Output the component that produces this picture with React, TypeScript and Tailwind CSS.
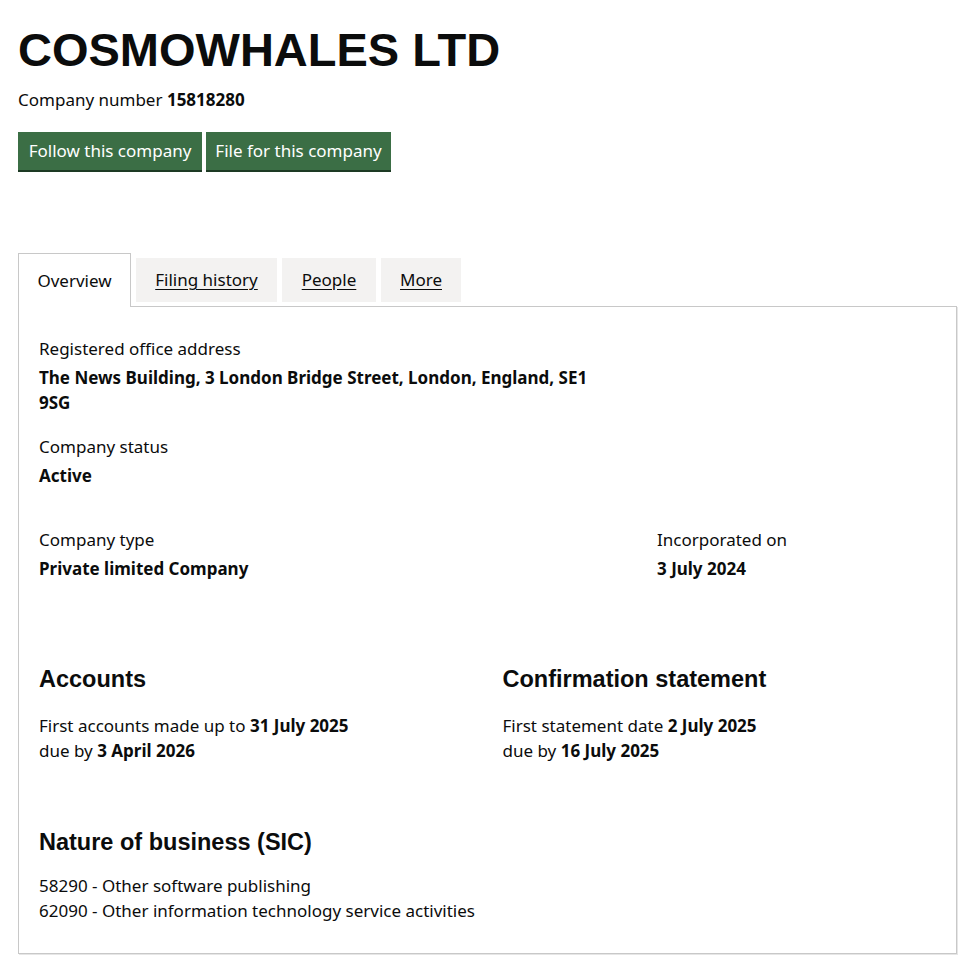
import React from 'react';

const tabs = [
    { label: 'Filing history', width: 'w-[141px]' },
    { label: 'People', width: 'w-[94px]' },
    { label: 'More', width: 'w-[80px]' },
];

function Field({ label, children, className = '' }: { label: string; children: React.ReactNode; className?: string }) {
    return (
        <div className={className}>
            <p className="leading-[25px]">{label}</p>
            <p className="mt-[4px] font-bold leading-[25px]">{children}</p>
        </div>
    );
}

export default function App() {
    return (
        <div className="min-h-screen bg-white px-[18px] text-[17px] text-[#0b0c0c] [font-family:'Noto_Sans',sans-serif]">
            {/* Header */}
            <h1 className="pt-[26px] text-[47px] font-bold leading-[47px] [font-family:'Liberation_Sans',Arial,sans-serif]">
                COSMOWHALES LTD
            </h1>
            <p className="mt-[14px] leading-[25px]">
                Company number <strong className="font-bold">15818280</strong>
            </p>

            <div className="mt-[20px] flex gap-[4px]">
                <button className="flex h-[38px] w-[184px] items-center justify-center bg-[#3b6e45] text-white shadow-[0_2px_0_#1d3a24]">
                    Follow this company
                </button>
                <button className="flex h-[38px] w-[185px] items-center justify-center bg-[#3b6e45] text-white shadow-[0_2px_0_#1d3a24]">
                    File for this company
                </button>
            </div>

            {/* Tabs */}
            <div className="mt-[83px] flex items-start">
                <div className="relative z-10 -mb-[1px] flex h-[54px] w-[113px] items-center justify-center border border-b-0 border-[#c8c8c8] bg-white">
                    Overview
                </div>
                {tabs.map((tab) => (
                    <a
                        key={tab.label}
                        href="#"
                        className={`ml-[5px] mt-[5px] flex h-[44px] ${tab.width} items-center justify-center bg-[#f3f2f1] underline underline-offset-[3px]`}
                    >
                        {tab.label}
                    </a>
                ))}
            </div>

            {/* Panel */}
            <div className="border border-[#c8c8c8] px-[20px] pb-[30px] pt-[29px] shadow-[1px_1px_0_#e6e6e6]">
                <Field label="Registered office address">
                    The News Building, 3 London Bridge Street, London, England, SE1
                    <br />
                    9SG
                </Field>
                <Field label="Company status" className="mt-[19px]">
                    Active
                </Field>

                <div className="-mx-[15px] mt-[39px] flex">
                    <Field label="Company type" className="w-2/3 px-[15px]">
                        Private limited Company
                    </Field>
                    <Field label="Incorporated on" className="w-1/3 px-[15px]">
                        3 July 2024
                    </Field>
                </div>

                <div className="-mx-[15px] mt-[83px] flex">
                    <div className="w-1/2 px-[15px]">
                        <h2 className="text-[23.5px] font-bold leading-[30px] [font-family:'Liberation_Sans',Arial,sans-serif]">
                            Accounts
                        </h2>
                        <p className="mt-[19px] leading-[25px]">
                            First accounts made up to <strong>31 July 2025</strong>
                            <br />
                            due by <strong>3 April 2026</strong>
                        </p>
                    </div>
                    <div className="w-1/2 px-[15px]">
                        <h2 className="text-[23.5px] font-bold leading-[30px] [font-family:'Liberation_Sans',Arial,sans-serif]">
                            Confirmation statement
                        </h2>
                        <p className="mt-[19px] leading-[25px]">
                            First statement date <strong>2 July 2025</strong>
                            <br />
                            due by <strong>16 July 2025</strong>
                        </p>
                    </div>
                </div>

                <h2 className="mt-[64px] text-[23.5px] font-bold leading-[30px] [font-family:'Liberation_Sans',Arial,sans-serif]">
                    Nature of business (SIC)
                </h2>
                <ul className="mt-[16px] leading-[25px]">
                    <li>58290 - Other software publishing</li>
                    <li>62090 - Other information technology service activities</li>
                </ul>
            </div>
        </div>
    );
}
